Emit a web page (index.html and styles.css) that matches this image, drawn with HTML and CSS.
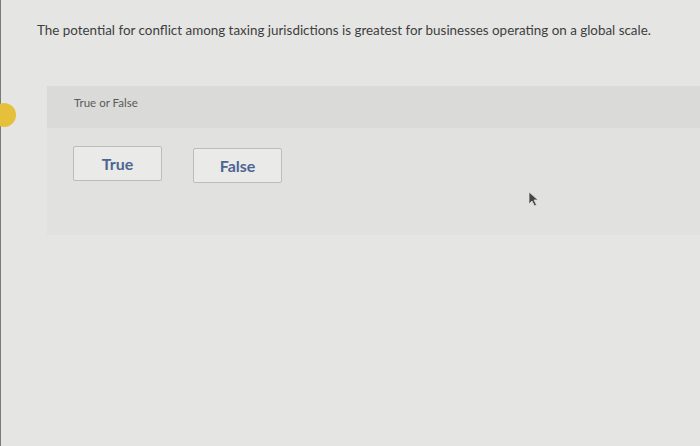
FILE: index.html
```html
<!DOCTYPE html>
<html>
<head>
  <title>True or False</title>
  <link rel="stylesheet" href="styles.css">
</head>
<body>
  <div class="page">
    <p class="question">The potential for conflict among taxing jurisdictions is greatest for businesses operating on a global scale.</p>

    <div class="item">
      <div class="marker"></div>
      <div class="panel">
        <div class="panel-head">True or False</div>
        <div class="panel-body">
          <button class="choice">True</button>
          <button class="choice choice-low">False</button>
        </div>
        <svg class="cursor" width="12" height="16" viewBox="0 0 12 16">
          <path d="M1 1 L1 13 L4 10 L6.5 15 L8.5 14 L6 9 L10 9 Z" fill="#444" stroke="#ddd" stroke-width="0.8"/>
        </svg>
      </div>
    </div>
  </div>
</body>
</html>
```

FILE: styles.css
```css
body {
  margin: 0;
  font-family: Lato, "Open Sans", sans-serif;
  background-color: #e5e5e3;
}

.page {
  height: 446px;
  border-left: 1px solid #7a7a76;
  box-sizing: border-box;
  padding-top: 22px;
}

.question {
  margin: 0 0 0 36px;
  font-size: 13.4px;
  color: #3e3e40;
}

.item {
  display: flex;
  align-items: flex-start;
  margin-top: 48px;
}

.marker {
  width: 24px;
  height: 24px;
  margin: 17px 0 0 -9px;
  border-radius: 50%;
  background-color: #e6c03a;
}

.panel {
  position: relative;
  flex: 1;
  margin-left: 31px;
  background-color: #e1e1df;
}

.panel-head {
  height: 42px;
  padding: 10px 0 0 27px;
  box-sizing: border-box;
  background-color: #dadad8;
  font-size: 11.5px;
  color: #5a5a5c;
}

.panel-body {
  display: flex;
  align-items: flex-start;
  gap: 31px;
  height: 107px;
  padding: 18px 0 0 26px;
  box-sizing: border-box;
}

.choice {
  width: 89px;
  height: 35px;
  border: 1px solid #bcbcba;
  border-radius: 2px;
  background-color: #eaeae8;
  font-family: Lato, "Open Sans", sans-serif;
  font-size: 16px;
  font-weight: bold;
  color: #4d6593;
}

.choice-low {
  margin-top: 2px;
}

.cursor {
  position: absolute;
  left: 481px;
  top: 105px;
}
```
